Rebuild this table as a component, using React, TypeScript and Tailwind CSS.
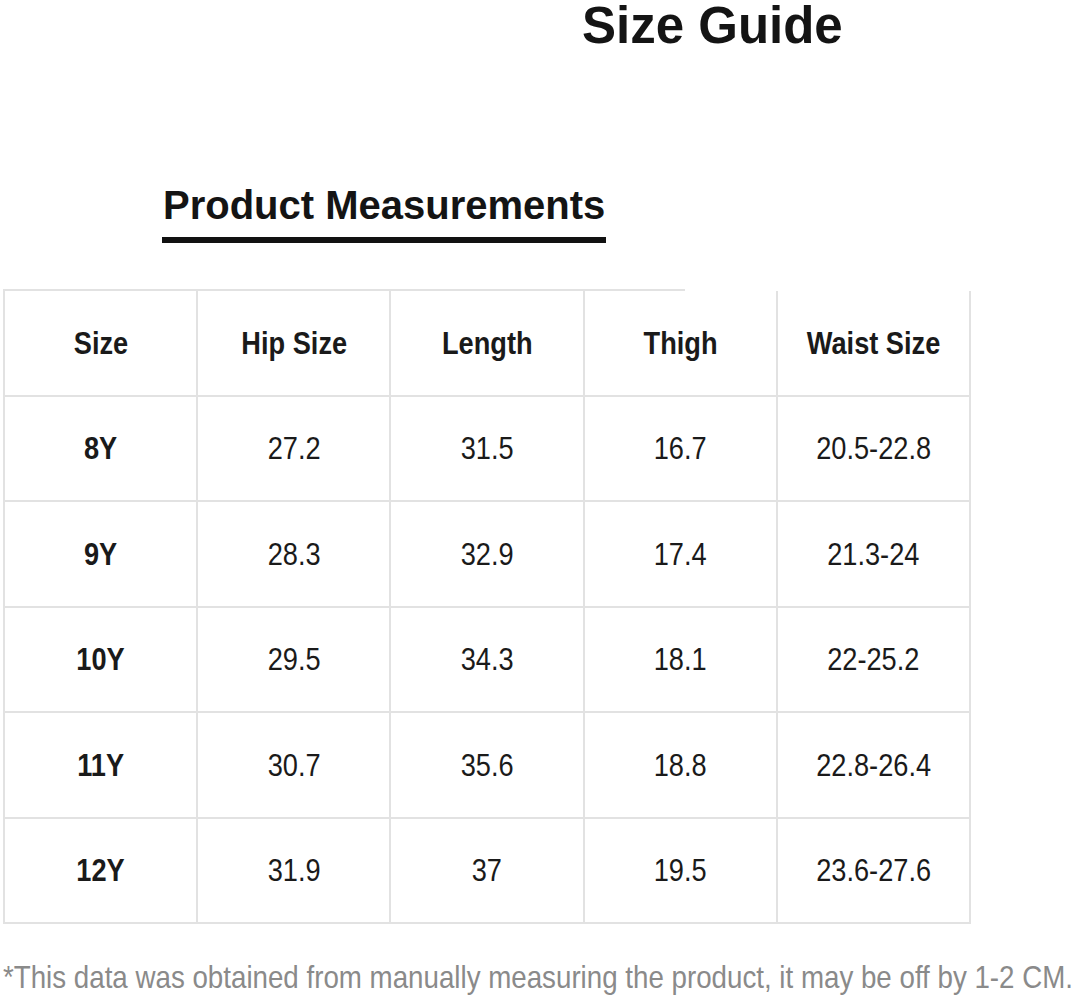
import React from 'react';

const headers = ['Size', 'Hip Size', 'Length', 'Thigh', 'Waist Size'];

const rows: string[][] = [
    ['8Y', '27.2', '31.5', '16.7', '20.5-22.8'],
    ['9Y', '28.3', '32.9', '17.4', '21.3-24'],
    ['10Y', '29.5', '34.3', '18.1', '22-25.2'],
    ['11Y', '30.7', '35.6', '18.8', '22.8-26.4'],
    ['12Y', '31.9', '37', '19.5', '23.6-27.6'],
];

// Arial Narrow look: Liberation Sans squeezed horizontally
const Cell: React.FC<{ bold?: boolean; children: React.ReactNode }> = ({ bold, children }) => (
    <div className="h-[105.5px] flex items-center justify-center border-r-2 border-b-2 border-[#e2e2e2]">
        <span className={`inline-block scale-x-[0.85] origin-center whitespace-nowrap text-[32px] leading-none text-[#1a1a1a] ${bold ? 'font-bold' : 'font-normal'}`}>
            {children}
        </span>
    </div>
);

const App: React.FC = () => {
    return (
        <div className="w-[1076px] h-[998px] bg-white overflow-hidden" style={{ fontFamily: '"Liberation Sans", Arial, sans-serif' }}>
            {/* Title */}
            <div className="h-[59px] pl-[582px]">
                <h1 className="text-[51px] leading-[52px] font-bold text-[#141414] whitespace-nowrap">Size Guide</h1>
            </div>

            {/* Section heading */}
            <div className="mt-[126px] pl-[162px]">
                <h2 className="inline-block px-[1px] pb-[12px] border-b-[6px] border-[#111] text-[40px] leading-none font-bold text-[#141414] whitespace-nowrap">
                    Product Measurements
                </h2>
            </div>

            {/* Table */}
            <div className="mt-[46px] pl-[3px]">
                <div className="w-[682px] h-[2px] bg-[#e2e2e2]" />
                <div className="grid grid-cols-5 w-[968px] border-l-2 border-[#e2e2e2]">
                    {headers.map((h) => (
                        <Cell key={h} bold>{h}</Cell>
                    ))}
                    {rows.map((r) =>
                        r.map((v, i) => (
                            <Cell key={r[0] + i} bold={i === 0}>{v}</Cell>
                        ))
                    )}
                </div>
            </div>

            {/* Note */}
            <p className="mt-[37px] pl-[3px] whitespace-nowrap">
                <span className="inline-block scale-x-[0.866] origin-left text-[32px] leading-none text-[#8a8a8a]">
                    *This data was obtained from manually measuring the product, it may be off by 1-2 CM.
                </span>
            </p>
        </div>
    );
};

export default App;
